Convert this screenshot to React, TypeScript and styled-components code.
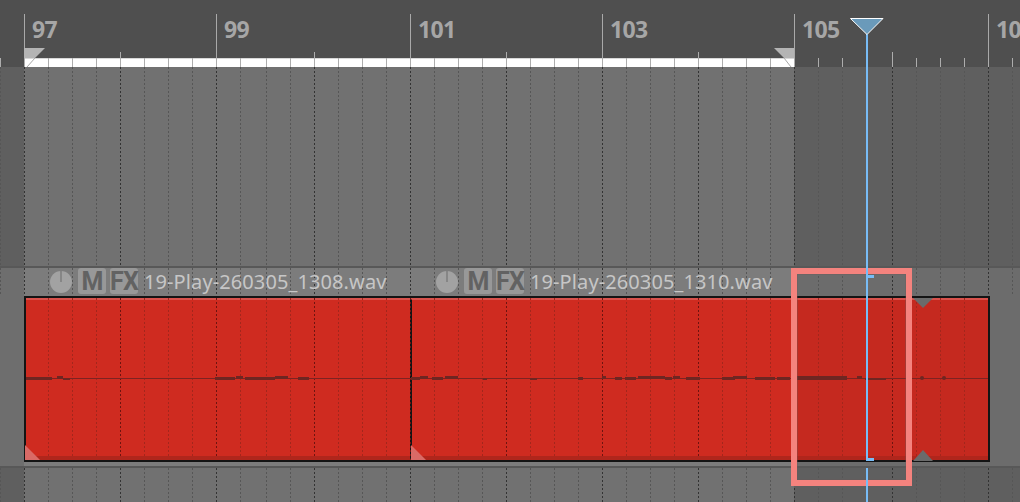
import styled, { createGlobalStyle } from 'styled-components';

const ORIGIN = 24;
const LOOP_END = 794;

const GlobalStyle = createGlobalStyle`
  html, body {
    margin: 0;
    padding: 0;
    background: #4f4f4f;
    font-family: "Noto Sans", "Liberation Sans", sans-serif;
  }
`;

const bars = [
  { label: '97', width: 192 },
  { label: '99', width: 194 },
  { label: '101', width: 192 },
  { label: '103', width: 192 },
  { label: '105', width: 194 },
  { label: '107', width: 60 },
];

const clips = [
  { name: '19-Play-260305_1308.wav', width: 386, bodyWidth: 384, stop: 999 },
  { name: '19-Play-260305_1310.wav', width: 578, bodyWidth: 578, stop: 382 },
];

const waveSegments = [
  [26, 52, 377, 3], [57, 63, 376, 3], [63, 70, 378, 2], [215, 235, 377, 3], [236, 243, 376, 3],
  [245, 275, 377, 3], [275, 288, 376, 3], [298, 309, 377, 3],
  [411, 420, 377, 3], [420, 428, 376, 3], [432, 443, 377, 3], [445, 458, 376, 3], [483, 487, 378, 2],
  [530, 537, 378, 2], [578, 583, 377, 3], [602, 606, 376, 3], [615, 622, 377, 3], [625, 636, 377, 3],
  [638, 665, 376, 3], [665, 672, 377, 3], [673, 680, 376, 3], [686, 700, 377, 3], [722, 735, 377, 3],
  [733, 747, 376, 3], [755, 775, 377, 3], [777, 790, 377, 3], [797, 847, 376, 4], [857, 862, 376, 3],
  [865, 886, 378, 2],
];

const Stage = styled.div`
  position: relative;
  width: 1020px;
  height: 502px;
  overflow: hidden;
  background: #4f4f4f;
`;

const Ruler = styled.div`
  display: flex;
  height: 67px;
  padding-left: ${ORIGIN}px;
  background: #4f4f4f;
`;

const BarCell = styled.div<{ $width: number }>`
  flex: none;
  box-sizing: border-box;
  width: ${(p) => p.$width}px;
  height: 44px;
  margin-top: 14px;
  padding-left: 7px;
  border-left: 1px solid #a9a9a9;
  color: #a6a6a6;
  font-size: 23px;
  font-weight: 700;
  letter-spacing: -0.6px;
  line-height: 31px;
  white-space: nowrap;
`;

const Lane = styled.div<{ $height: number }>`
  height: ${(p) => p.$height}px;
  background: linear-gradient(
    to right,
    #5f5f5f 0,
    #5f5f5f ${ORIGIN}px,
    #717171 ${ORIGIN}px,
    #717171 ${LOOP_END}px,
    #5f5f5f ${LOOP_END}px
  );
`;

const Separator = styled.div`
  height: 2px;
  background: #585858;
`;

const TrackLane = styled.div`
  height: 198px;
  background: linear-gradient(
    to right,
    #6e6e6e 0,
    #6e6e6e ${ORIGIN}px,
    #7c7c7c ${ORIGIN}px,
    #7c7c7c ${LOOP_END}px,
    #6c6c6c ${LOOP_END}px
  );
`;

const ClipHeaders = styled.div`
  display: flex;
  height: 28px;
  padding-left: ${ORIGIN}px;
`;

const ClipHeader = styled.div<{ $width: number }>`
  position: relative;
  z-index: 2;
  flex: none;
  display: flex;
  align-items: flex-start;
  gap: 4px;
  box-sizing: border-box;
  width: ${(p) => p.$width}px;
  height: 28px;
  padding-left: 26px;
`;

const Knob = styled.svg`
  flex: none;
  width: 22px;
  height: 22px;
  margin: 3px 2px 0 0;
`;

const HeaderButton = styled.span`
  flex: none;
  width: 28px;
  height: 26px;
  border-radius: 3px;
  background: #989898;
  color: #626262;
  font-family: Roboto, "Noto Sans", sans-serif;
  font-size: 25px;
  font-weight: 700;
  letter-spacing: -0.8px;
  line-height: 27px;
  text-align: center;
`;

const ClipName = styled.span`
  margin-left: 2px;
  color: #c6c6c6;
  font-size: 20px;
  letter-spacing: 0.1px;
  line-height: 28px;
  white-space: nowrap;
`;

const ClipRow = styled.div`
  display: flex;
  box-sizing: border-box;
  width: 966px;
  height: 166px;
  margin-left: ${ORIGIN}px;
  border: 2px solid #141414;
`;

const Clip = styled.div<{ $width: number; $stop: number }>`
  position: relative;
  flex: none;
  box-sizing: border-box;
  width: ${(p) => p.$width}px;
  border-top: 2px solid #d8524c;
  border-bottom: 4px solid #b0261c;
  background: linear-gradient(
    to right,
    #cf2b20 0,
    #cf2b20 ${(p) => p.$stop}px,
    #c5291f ${(p) => p.$stop}px
  );

  & + & {
    border-left: 2px solid #141414;
  }
`;

const FadeHandle = styled.svg`
  position: absolute;
  left: -1px;
  bottom: -4px;
  width: 15px;
  height: 15px;
`;

const Overlay = styled.svg`
  position: absolute;
  left: 0;
  top: 0;
  z-index: 1;
  width: 1020px;
  height: 502px;
  pointer-events: none;
`;

const Selection = styled.div`
  position: absolute;
  z-index: 4;
  left: 791px;
  top: 268px;
  box-sizing: border-box;
  width: 121px;
  height: 218px;
  border: 6px solid #f4837e;
  box-shadow: inset 0 0 0 1px rgba(110, 90, 90, 0.35);
`;

const PlayheadLine = styled.div<{ $top: number; $height: number }>`
  position: absolute;
  z-index: 5;
  left: 866px;
  top: ${(p) => p.$top}px;
  width: 2px;
  height: ${(p) => p.$height}px;
  background: #78bcf6;
`;

const PlayheadFlag = styled.div<{ $top: number }>`
  position: absolute;
  z-index: 5;
  left: 868px;
  top: ${(p) => p.$top}px;
  width: 6px;
  height: 3px;
  background: #78bcf6;
`;

const PlayheadCap = styled.svg`
  position: absolute;
  z-index: 6;
  left: 849px;
  top: 17px;
  width: 36px;
  height: 19px;
`;

// the grid is not quite even, it picks up a pixel at the bar edges
const beatX = (i: number) => ORIGIN + i * 24 + (i >= 36 ? 4 : i >= 10 ? 2 : 0);

const laneSpans = [
  [67, 266],
  [268, 296],
  [298, 456],
  [468, 502],
];

const GridDrawing = () => {
  const beats = Array.from({ length: 43 }, (_, i) => i - 1);
  return (
    <Overlay viewBox="0 0 1020 502">
      <rect x={ORIGIN} y={58} width={LOOP_END - ORIGIN} height={9} fill="#ffffff" />
      <rect x={ORIGIN} y={58} width={LOOP_END - ORIGIN} height={1} fill="#d8d8d8" />
      {beats.map((i) => {
        const x = beatX(i) + 0.5;
        const major = i % 4 === 0;
        const inClip = x > 26 && x < 988;
        return (
          <g key={i}>
            <line x1={x} x2={x} y1={major && i % 8 !== 0 ? 52 : 58} y2={67} stroke="#adadad" />
            {laneSpans
              .filter(([a]) => a !== 298 || inClip)
              .map(([a, b]) => (
                <line
                  key={a}
                  x1={x}
                  x2={x}
                  y1={a}
                  y2={b}
                  stroke={a === 298 ? (major ? '#6e1410' : '#a3261c') : major ? '#333333' : '#565656'}
                  strokeDasharray="2 2"
                />
              ))}
          </g>
        );
      })}
      <rect x="26" y="378" width="962" height="1" fill="#7d2322" />
      {waveSegments.map(([a, b, y, h]) => (
        <rect key={a} x={a} y={y} width={b - a} height={h} fill="#6e2622" />
      ))}
      <circle cx="922" cy="378" r="2" fill="#6e2622" />
      <circle cx="944" cy="378" r="2" fill="#6e2622" />
      <polygon points="24,48 45,48 35,58 24,58" fill="#b4b4b4" />
      <line x1="35" y1="58" x2="27" y2="67" stroke="#a8a8a8" />
      <polygon points="774,48 794,48 794,58 784,58" fill="#b4b4b4" />
      <line x1="784" y1="58" x2="791" y2="67" stroke="#a8a8a8" />
      <polygon points="913,298 933,298 923,308" fill="#6b6b6b" />
      <polygon points="913,461 933,461 923,450" fill="#6b6b6b" />
    </Overlay>
  );
};

export default function App() {
  return (
    <Stage>
      <GlobalStyle />
      <Ruler>
        {bars.map((bar) => (
          <BarCell key={bar.label} $width={bar.width}>
            {bar.label}
          </BarCell>
        ))}
      </Ruler>
      <Lane $height={199} />
      <Separator />
      <TrackLane>
        <ClipHeaders>
          {clips.map((clip) => (
            <ClipHeader key={clip.name} $width={clip.width}>
              <Knob viewBox="0 0 22 22">
                <circle cx="11" cy="11" r="11" fill="#a2a2a2" />
                <rect x="10.5" y="0" width="1" height="11" fill="#6a6a6a" />
              </Knob>
              <HeaderButton>M</HeaderButton>
              <HeaderButton>FX</HeaderButton>
              <ClipName>{clip.name}</ClipName>
            </ClipHeader>
          ))}
        </ClipHeaders>
        <ClipRow>
          {clips.map((clip) => (
            <Clip key={clip.name} $width={clip.bodyWidth} $stop={clip.stop}>
              <FadeHandle viewBox="0 0 15 15">
                <polygon points="0,0 15,15 0,15" fill="#d96a66" />
              </FadeHandle>
            </Clip>
          ))}
        </ClipRow>
      </TrackLane>
      <Separator />
      <Lane $height={34} />
      <GridDrawing />
      <Selection />
      <PlayheadLine $top={34} $height={427} />
      <PlayheadLine $top={468} $height={34} />
      <PlayheadFlag $top={275} />
      <PlayheadFlag $top={458} />
      <PlayheadCap viewBox="0 0 36 19">
        <polygon points="1.5,1.5 34,1.5 18,17.5" fill="#6a9aba" stroke="#ffffff" strokeWidth="1" />
      </PlayheadCap>
    </Stage>
  );
}
